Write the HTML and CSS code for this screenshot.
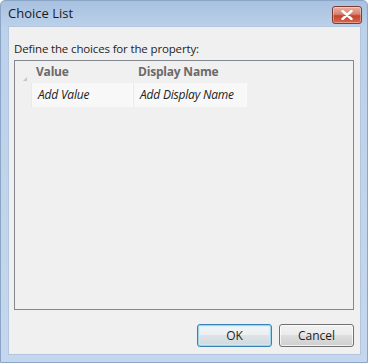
FILE: index.html
```html
<!DOCTYPE html>
<html lang="en">
<head>
  <meta charset="UTF-8" />
  <title>Choice List</title>
  <link rel="stylesheet" href="styles.css">
</head>
<body>
  <div class="window">
    <div class="titlebar">
      <span class="title">Choice List</span>
      <button class="close" aria-label="Close">
        <svg width="12" height="10" viewBox="0 0 12 10">
          <path d="M1.5 1 L10.5 9 M10.5 1 L1.5 9" stroke="#fff" stroke-width="2.4" stroke-linecap="round"/>
        </svg>
      </button>
    </div>

    <div class="client">
      <div class="prompt">Define the choices for the property:</div>

      <div class="grid">
        <div class="grid-row grid-head">
          <div class="row-header"><span class="corner"></span></div>
          <div class="cell col-value">Value</div>
          <div class="cell col-name">Display Name</div>
        </div>
        <div class="grid-row grid-new">
          <div class="row-header"></div>
          <div class="cell col-value">Add Value</div>
          <div class="cell col-name">Add Display Name</div>
        </div>
      </div>

      <div class="footer">
        <button class="btn btn-default">OK</button>
        <button class="btn">Cancel</button>
      </div>
    </div>
  </div>
</body>
</html>
```

FILE: styles.css
```css
body {
  margin: 0;
  font-family: 'Open Sans', 'Noto Sans', sans-serif;
  font-size: 12px;
  color: #1e1e1e;
}

.window {
  width: 368px;
  height: 363px;
  box-sizing: border-box;
  display: flex;
  flex-direction: column;
  background: linear-gradient(#a7c1df 0, #bcd1ea 26px, #c4d7ee 100%);
  border: 1px solid #8aa5c6;
  border-radius: 5px 5px 0 0;
}

.titlebar {
  height: 25px;
  display: flex;
  align-items: center;
  justify-content: space-between;
  padding: 0 5px 0 7px;
}

.title {
  font-size: 13px;
  color: #1b1b1b;
  margin-top: -1px;
}

.close {
  width: 30px;
  height: 18px;
  margin-top: 3px;
  padding: 0;
  border: 1px solid #7c3a30;
  border-radius: 3px;
  background: linear-gradient(#eab0a3 0, #d8826f 45%, #c4432c 55%, #d66a4e 100%);
  box-shadow: inset 0 0 0 1px rgba(255,255,255,0.35);
  display: flex;
  align-items: center;
  justify-content: center;
}

.client {
  flex: 1;
  margin: 0 6px 7px 7px;
  background: #f0f0f0;
  border: 1px solid #b2c5dc;
  display: flex;
  flex-direction: column;
  padding: 0 6px 0 5px;
}

.prompt {
  margin-top: 13px;
  height: 18px;
  line-height: 18px;
  font-size: 11.5px;
  letter-spacing: -0.15px;
}

.grid {
  margin-top: 2px;
  height: 250px;
  box-sizing: border-box;
  border: 1px solid #828790;
  background: #f0f0f0;
}

.grid-row {
  display: flex;
}

.row-header {
  width: 16px;
  position: relative;
}

.corner {
  position: absolute;
  left: 8px;
  bottom: 2px;
  width: 0;
  height: 0;
  border-left: 4px solid transparent;
  border-bottom: 4px solid #c4c4c4;
}

.cell {
  box-sizing: border-box;
  padding-left: 5px;
  white-space: nowrap;
}

.col-value {
  width: 102px;
}

.col-name {
  width: 114px;
}

.grid-head {
  height: 21px;
  margin-top: 1px;
}

.grid-head .cell {
  line-height: 20px;
  font-weight: bold;
  color: #6a6a6a;
  letter-spacing: -0.2px;
}

.grid-new {
  height: 24px;
}

.grid-new .cell {
  line-height: 24px;
  font-style: italic;
  color: #222;
  background: #f8f8f8;
  border-right: 1px solid #fbfbfb;
  border-left: 1px solid #e9e9e9;
  letter-spacing: -0.2px;
  padding-left: 6px;
}

.footer {
  margin-top: auto;
  margin-bottom: 7px;
  display: flex;
  justify-content: flex-end;
  gap: 7px;
}

.btn {
  width: 75px;
  height: 23px;
  padding: 0;
  font-family: inherit;
  font-size: 12px;
  color: #1e1e1e;
  border: 1px solid #707070;
  border-radius: 3px;
  background: linear-gradient(#f2f2f2 0, #ebebeb 50%, #dddddd 50%, #cfcfcf 100%);
  box-shadow: inset 0 0 0 1px rgba(255,255,255,0.7);
}

.btn-default {
  border-color: #3c7fb1;
  box-shadow: inset 0 0 0 1px #9fd6ee, inset 0 0 0 2px rgba(200,236,250,0.6);
  background: linear-gradient(#f3f5f6 0, #ebeff1 50%, #dde3e6 50%, #d2d9dc 100%);
}
```
